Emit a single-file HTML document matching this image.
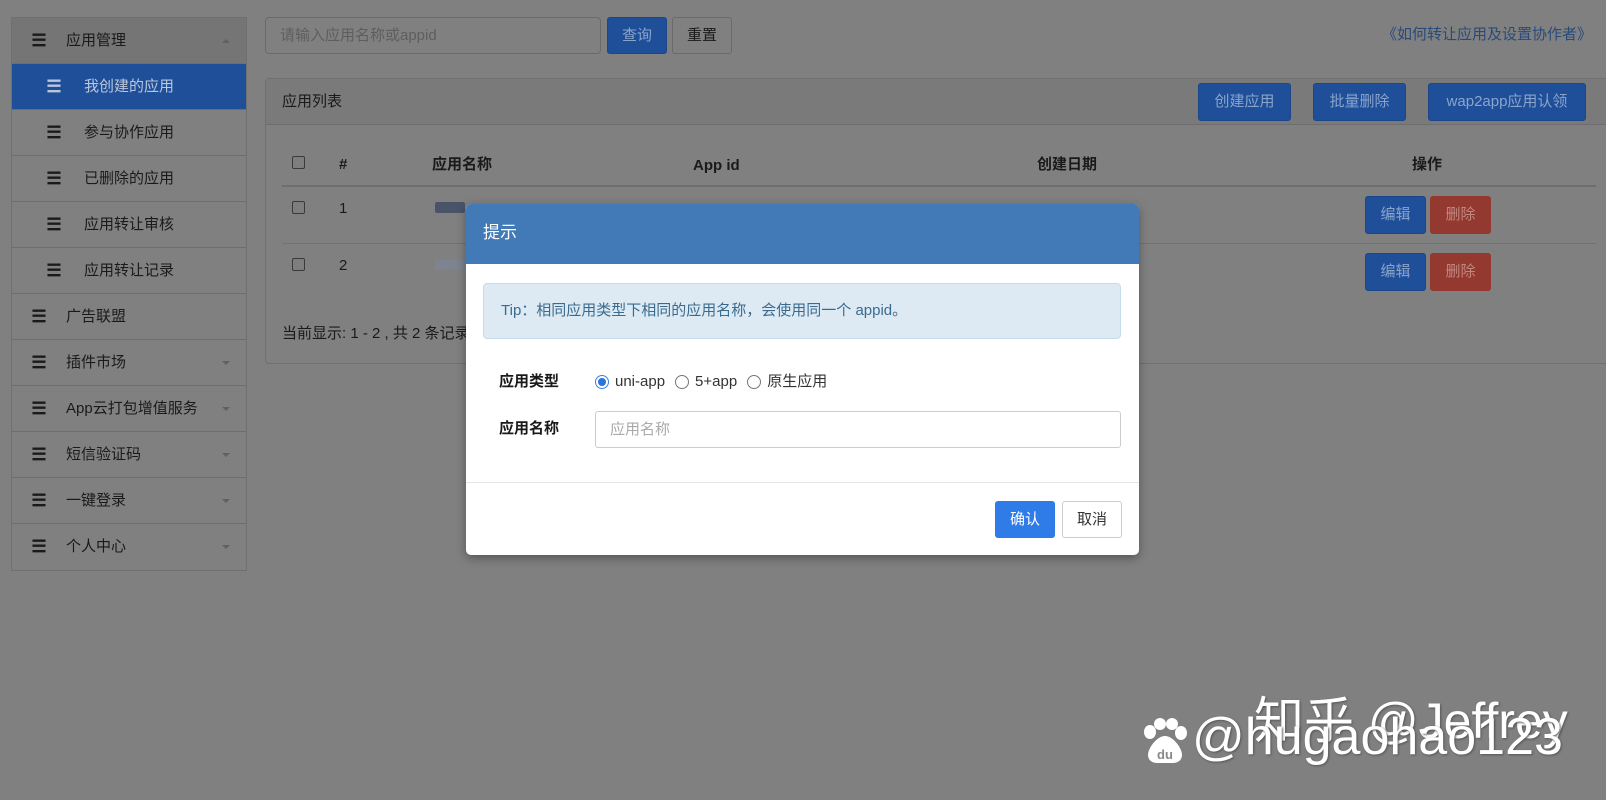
<!DOCTYPE html>
<html><head><meta charset="utf-8"><style>
*{box-sizing:border-box;margin:0;padding:0}
body{width:1606px;height:800px;background:#808080;font-family:"Liberation Sans","Noto Sans CJK SC",sans-serif;font-size:15px;line-height:20px;color:#1a1a1a;position:relative;overflow:hidden}
.abs{position:absolute}
.side{left:11px;top:17px;width:236px;border:1px solid #707070;background:#808080}
.side div{height:46px;border-bottom:1px solid #6e6e6e;display:flex;align-items:center;font-size:15px;color:#1a1a1a;position:relative}
.side .hd{background:#757575}
.side .act{background:#1f4f98;color:#b9c6dc}
.side i{font-style:normal;font-size:17px;font-weight:bold;width:54px;text-align:center;display:inline-block}
.side .sub i{width:72px;padding-left:12px}
.side .car{position:absolute;right:16px;top:21px;border-left:4px solid transparent;border-right:4px solid transparent;border-top:4px solid #606060}
.side .up{border-top:none;border-bottom:4px solid #606060}
.btn{position:absolute;border-radius:3px;display:flex;align-items:center;justify-content:center;font-size:15px}
.blue{background:#1f4f98;color:#8aa4cc;border:1px solid #1a4789}
.red{background:#94392f;color:#c08880}
.gray{background:#808080;border:1px solid #6a6a6a;color:#1a1a1a}
.cb{position:absolute;width:13px;height:13px;border:1px solid #3a3a3a;border-radius:2px;background:#7e7e7e}
.wm{color:#fff;text-shadow:1px 1px 2px #555;white-space:nowrap}
.th{position:absolute;top:155px;font-weight:bold;line-height:20px}
</style></head><body>

<div class="abs side">
<div class="hd"><i>☰</i>应用管理<span class="car up"></span></div>
<div class="act sub"><i style="color:#b9c6dc">☰</i>我创建的应用</div>
<div class="sub"><i>☰</i>参与协作应用</div>
<div class="sub"><i>☰</i>已删除的应用</div>
<div class="sub"><i>☰</i>应用转让审核</div>
<div class="sub"><i>☰</i>应用转让记录</div>
<div><i>☰</i>广告联盟</div>
<div><i>☰</i>插件市场<span class="car"></span></div>
<div><i>☰</i>App云打包增值服务<span class="car"></span></div>
<div><i>☰</i>短信验证码<span class="car"></span></div>
<div><i>☰</i>一键登录<span class="car"></span></div>
<div style="border-bottom:none"><i>☰</i>个人中心<span class="car"></span></div>
</div>

<div class="abs" style="left:265px;top:17px;width:336px;height:37px;border:1px solid #6a6a6a;border-radius:4px;padding:8px 14px;color:#5e5e5e">请输入应用名称或appid</div>
<div class="btn blue" style="left:607px;top:17px;width:60px;height:37px">查询</div>
<div class="btn gray" style="left:672px;top:17px;width:60px;height:37px">重置</div>
<div class="abs" style="left:1380px;top:25px;width:212px;text-align:right;color:#284a7a;font-size:15px">《如何转让应用及设置协作者》</div>

<div class="abs" style="left:265px;top:78px;width:1360px;height:286px;border:1px solid #707070;border-radius:4px"></div>
<div class="abs" style="left:266px;top:79px;width:1360px;height:46px;background:#7a7a7a;border-bottom:1px solid #6e6e6e"></div>
<div class="abs" style="left:282px;top:92px">应用列表</div>
<div class="btn blue" style="left:1198px;top:83px;width:93px;height:38px">创建应用</div>
<div class="btn blue" style="left:1313px;top:83px;width:93px;height:38px">批量删除</div>
<div class="btn blue" style="left:1428px;top:83px;width:158px;height:38px">wap2app应用认领</div>

<div class="cb" style="left:292px;top:156px"></div>
<div class="th" style="left:339px">#</div>
<div class="th" style="left:432px">应用名称</div>
<div class="th" style="left:693px;top:156px">App id</div>
<div class="th" style="left:1037px">创建日期</div>
<div class="th" style="left:1412px">操作</div>
<div class="abs" style="left:282px;top:185px;width:1314px;height:2px;background:#6e6e6e"></div>
<div class="abs" style="left:282px;top:243px;width:1314px;height:1px;background:#727272"></div>
<div class="cb" style="left:292px;top:201px"></div>
<div class="cb" style="left:292px;top:258px"></div>
<div class="abs" style="left:339px;top:199px">1</div>
<div class="abs" style="left:339px;top:256px">2</div>
<div class="abs" style="left:435px;top:202px;width:30px;height:11px;background:#4a5468;border-radius:2px"></div>
<div class="abs" style="left:435px;top:260px;width:30px;height:10px;background:#7d8390"></div>
<div class="btn blue" style="left:1365px;top:196px;width:61px;height:38px">编辑</div>
<div class="btn red" style="left:1430px;top:196px;width:61px;height:38px">删除</div>
<div class="btn blue" style="left:1365px;top:253px;width:61px;height:38px">编辑</div>
<div class="btn red" style="left:1430px;top:253px;width:61px;height:38px">删除</div>
<div class="abs" style="left:282px;top:324px">当前显示: 1 - 2 , 共 2 条记录</div>

<div class="abs" style="left:466px;top:204px;width:673px;height:351px;background:#fff;border-radius:5px;box-shadow:0 3px 10px rgba(0,0,0,.35);overflow:hidden">
 <div style="height:60px;background:#4279b7;color:#fff;font-size:17px;padding:19px 17px">提示</div>
 <div class="abs" style="left:17px;top:79px;width:638px;height:56px;background:#ddeaf4;border:1px solid #c6dcea;border-radius:4px;color:#3a6b8e;padding:17px 17px;font-size:15px">Tip：相同应用类型下相同的应用名称，会使用同一个 appid。</div>
 <div class="abs" style="left:33px;top:168px;font-weight:bold">应用类型</div>
 <div class="abs" style="left:129px;top:168px;display:flex;align-items:center;gap:6px;color:#333">
  <span style="width:14px;height:14px;border-radius:50%;border:1px solid #3b82e0;display:inline-flex;align-items:center;justify-content:center"><span style="width:8px;height:8px;border-radius:50%;background:#2a74dc"></span></span>uni-app
  <span style="width:14px;height:14px;border-radius:50%;border:1px solid #777;margin-left:4px"></span>5+app
  <span style="width:14px;height:14px;border-radius:50%;border:1px solid #777;margin-left:4px"></span>原生应用
 </div>
 <div class="abs" style="left:33px;top:215px;font-weight:bold">应用名称</div>
 <div class="abs" style="left:129px;top:207px;width:526px;height:37px;border:1px solid #ccc;border-radius:3px;padding:8px 14px;color:#aaa">应用名称</div>
 <div class="abs" style="left:0;top:278px;width:673px;height:1px;background:#e5e5e5"></div>
 <div class="btn" style="left:529px;top:297px;width:60px;height:37px;background:#2f7ce8;color:#fff">确认</div>
 <div class="btn" style="left:596px;top:297px;width:60px;height:37px;border:1px solid #ccc;color:#333">取消</div>
</div>

<div class="abs wm" style="left:1254px;top:696px;font-size:50px;line-height:50px">知乎 @Jeffrey</div>
<svg class="abs" style="left:1142px;top:718px" width="46" height="46" viewBox="0 0 46 46">
<g fill="#fff"><ellipse cx="8" cy="14" rx="6" ry="7"/><ellipse cx="18" cy="6" rx="6" ry="6"/><ellipse cx="30" cy="6" rx="6" ry="6"/><ellipse cx="39" cy="15" rx="6" ry="7"/><path d="M23 18c-8 0-17 12-17 19 0 5 4 8 9 8h16c5 0 9-3 9-8 0-7-9-19-17-19z"/></g>
<text x="23" y="41" fill="#888" font-size="13" font-family="Liberation Sans" text-anchor="middle" font-weight="bold">du</text></svg>
<div class="abs wm" style="left:1192px;top:707px;font-size:52px;line-height:60px">@hugaohao123</div>
</body></html>
